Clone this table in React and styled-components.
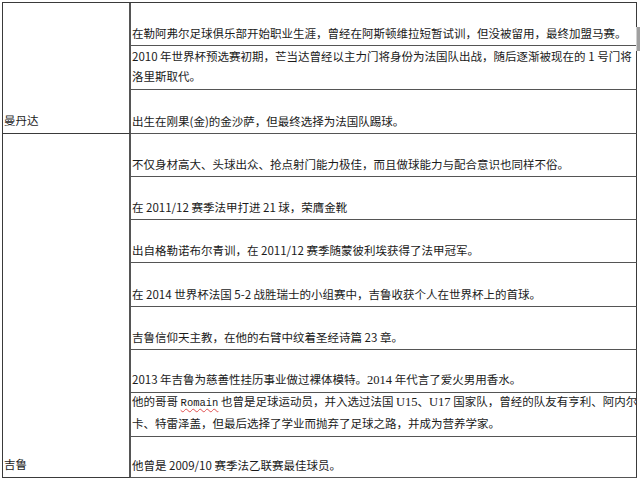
import styled, { createGlobalStyle } from "styled-components";

const GlobalStyle = createGlobalStyle`
  html, body {
    margin: 0;
    padding: 0;
    background: #fff;
  }
  body {
    font-family: "Noto Sans CJK SC", "Noto Sans", sans-serif;
    font-size: 11.5px;
    color: #1a1a1a;
  }
`;

const Page = styled.div`
  position: relative;
  width: 640px;
  height: 481px;
  overflow: hidden;
  padding: 2px 0 0 2px;
  box-sizing: border-box;
`;

const Grid = styled.div`
  display: grid;
  grid-template-columns: 128px 506px;
  grid-template-rows: ${props => props.rows.map(r => r + "px").join(" ")};
  border-top: 1px solid #3a3a3a;
  border-left: 1px solid #3a3a3a;
  width: max-content;
`;

const NameCell = styled.div`
  grid-column: 1;
  grid-row: ${props => props.span};
  display: flex;
  align-items: flex-end;
  box-sizing: border-box;
  padding: 0 0 3px 1px;
  line-height: 20px;
  border-right: 2px solid #555;
  border-bottom: 1px solid #3a3a3a;
`;

const TextCell = styled.div`
  grid-column: 2;
  display: flex;
  align-items: flex-end;
  box-sizing: border-box;
  padding: 0 0 ${props => (props.two ? 3 : 2)}px 1px;
  line-height: 20px;
  white-space: nowrap;
  overflow: hidden;
  border-right: 1px solid #3a3a3a;
  border-bottom: 1px solid #555;
`;

const Serif = styled.span`
  font-family: "Liberation Serif", serif;
  font-size: 12.5px;
`;

const Mono = styled.span`
  font-family: "Liberation Mono", monospace;
  font-size: 10.5px;
  text-decoration: underline wavy #e05050;
  text-decoration-thickness: 1px;
  text-underline-offset: 2px;
`;

const ScrollStub = styled.div`
  position: absolute;
  right: 0;
  top: 27px;
  width: 3px;
  height: 24px;
  background: #a0a0a0;
  border-left: 1px solid #d0d0d0;
`;

const rows = [43, 44, 44, 43, 43, 43, 44, 43, 43, 44, 41];

export default function App() {
  return (
    <Page>
      <GlobalStyle />
      <Grid rows={rows}>
        <NameCell span="1 / span 3">曼丹达</NameCell>
        <TextCell>在勒阿弗尔足球俱乐部开始职业生涯，曾经在阿斯顿维拉短暂试训，但没被留用，最终加盟马赛。</TextCell>
        <TextCell two>
          <div>
            2010 年世界杯预选赛初期，芒当达曾经以主力门将身份为法国队出战，随后逐渐被现在的 1 号门将
            <br />
            洛里斯取代。
          </div>
        </TextCell>
        <TextCell>出生在刚果(金)的金沙萨，但最终选择为法国队踢球。</TextCell>
        <NameCell span="4 / span 8">吉鲁</NameCell>
        <TextCell>不仅身材高大、头球出众、抢点射门能力极佳，而且做球能力与配合意识也同样不俗。</TextCell>
        <TextCell>在 2011/12 赛季法甲打进 21 球，荣膺金靴</TextCell>
        <TextCell>出自格勒诺布尔青训，在 2011/12 赛季随蒙彼利埃获得了法甲冠军。</TextCell>
        <TextCell>在 2014 世界杯法国 5-2 战胜瑞士的小组赛中，吉鲁收获个人在世界杯上的首球。</TextCell>
        <TextCell>吉鲁信仰天主教，在他的右臂中纹着圣经诗篇 23 章。</TextCell>
        <TextCell>
          <span>
            2013 年吉鲁为慈善性挂历事业做过裸体模特。<Serif>2014</Serif> 年代言了爱火男用香水。
          </span>
        </TextCell>
        <TextCell two>
          <div>
            他的哥哥 <Mono>Romain</Mono> 也曾是足球运动员，并入选过法国 <Serif>U15</Serif>、<Serif>U17</Serif> 国家队，曾经的队友有亨利、阿内尔
            <br />
            卡、特雷泽盖，但最后选择了学业而抛弃了足球之路，并成为营养学家。
          </div>
        </TextCell>
        <TextCell>他曾是 2009/10 赛季法乙联赛最佳球员。</TextCell>
      </Grid>
      <ScrollStub />
    </Page>
  );
}
